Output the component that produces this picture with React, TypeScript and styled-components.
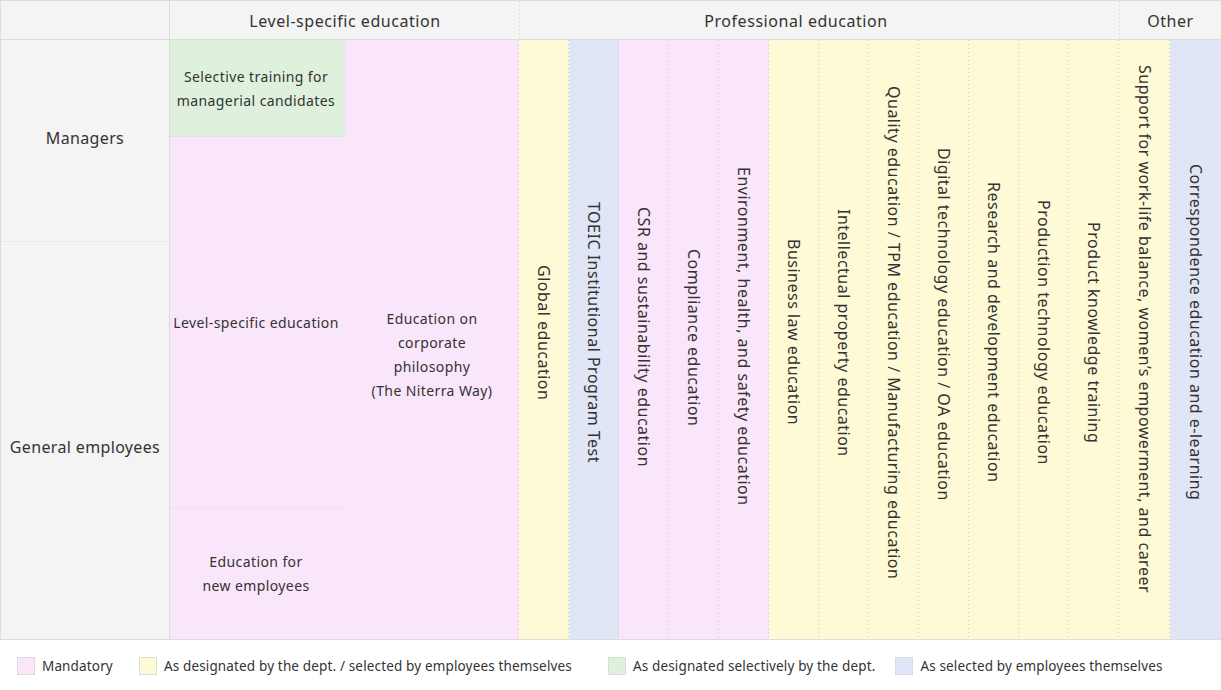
import React from 'react';
import styled, { createGlobalStyle, css } from 'styled-components';

type Tone = 'pink' | 'yellow' | 'green' | 'blue';

const tones: Record<Tone, string> = {
  pink: '#fae6fa',
  yellow: '#fffad6',
  green: '#dff1dc',
  blue: '#e0e6f5',
};

const line = '#dcdcdc';
const dot = '#cfcfcf';

const dottedRight = css`
  background-image: repeating-linear-gradient(to bottom, ${dot} 0 1px, transparent 1px 4px);
  background-size: 1px 100%;
  background-position: right top;
  background-repeat: no-repeat;
`;

const dottedBottom = css`
  background-image: repeating-linear-gradient(to right, ${dot} 0 1px, transparent 1px 4px);
  background-size: 100% 1px;
  background-position: left bottom;
  background-repeat: no-repeat;
`;

const GlobalStyle = createGlobalStyle`
  html, body {
    margin: 0;
    padding: 0;
    background: #fff;
  }
  body {
    font-family: 'Noto Sans', 'Noto Sans CJK JP', sans-serif;
    color: #333;
  }
`;

const Page = styled.div`
  width: 1221px;
  height: 690px;
  overflow: hidden;
`;

const Table = styled.div`
  display: flex;
  flex-direction: column;
  border-top: 1px solid ${line};
  border-bottom: 1px solid ${line};
`;

const HeaderRow = styled.div`
  display: grid;
  grid-template-columns: 170px 350px 600px 101px;
  height: 38px;
  background: #f4f4f4;
  border-bottom: 1px solid ${line};
`;

const Corner = styled.div`
  border-left: 1px solid ${line};
  border-right: 1px solid ${line};
`;

const HeadCell = styled.div<{ $last?: boolean; $shift?: number }>`
  display: flex;
  align-items: center;
  justify-content: center;
  padding-top: 2px;
  padding-right: ${({ $shift = 0 }) => $shift}px;
  font-size: 16px;
  letter-spacing: 0.55px;
  ${({ $last }) => ($last ? '' : dottedRight)}
`;

const Body = styled.div`
  display: flex;
  height: 599px;
`;

const Labels = styled.div`
  width: 170px;
  flex: none;
  display: flex;
  flex-direction: column;
  background: #f4f4f4;
  border-left: 1px solid ${line};
  border-right: 1px solid ${line};
  box-sizing: border-box;
`;

const Label = styled.div<{ $h?: number; $top?: boolean }>`
  display: flex;
  align-items: center;
  justify-content: center;
  font-size: 16px;
  letter-spacing: 0.35px;
  ${({ $h }) => ($h ? `height: ${$h}px; flex: none; padding-bottom: 6px; box-sizing: border-box;` : 'flex: 1; padding-top: 12px;')}
  ${({ $top }) => ($top ? dottedBottom : '')}
`;

const LevelCol = styled.div`
  width: 175px;
  flex: none;
  display: flex;
  flex-direction: column;
  ${dottedRight}
  background-color: ${tones.pink};
`;

const Cell = styled.div<{ $tone: Tone; $h?: number; $divided?: boolean }>`
  display: flex;
  align-items: center;
  justify-content: center;
  padding-right: 3px;
  text-align: center;
  font-size: 14px;
  line-height: 24px;
  letter-spacing: 0.4px;
  ${({ $h }) => ($h ? `height: ${$h}px; flex: none;` : 'flex: 1;')}
  ${({ $divided }) => ($divided ? dottedBottom : '')}
  background-color: ${({ $tone }) => tones[$tone]};
`;

const Philosophy = styled.div`
  width: 174px;
  flex: none;
  display: flex;
  align-items: center;
  justify-content: center;
  padding-top: 30px;
  box-sizing: border-box;
  text-align: center;
  font-size: 14px;
  line-height: 24px;
  letter-spacing: 0.4px;
  ${dottedRight}
  background-color: ${tones.pink};
`;

const VCol = styled.div<{ $tone: Tone; $w?: number; $last?: boolean; $offset?: number }>`
  width: ${({ $w = 50 }) => $w}px;
  flex: none;
  display: flex;
  align-items: center;
  justify-content: center;
  padding-bottom: ${({ $offset = 0 }) => 14 - $offset * 2}px;
  box-sizing: border-box;
  ${({ $last }) => ($last ? '' : dottedRight)}
  background-color: ${({ $tone }) => tones[$tone]};
`;

const VText = styled.span`
  writing-mode: vertical-rl;
  font-size: 16px;
  line-height: 20px;
  letter-spacing: 0.5px;
  white-space: nowrap;
`;

const Legend = styled.div`
  display: flex;
  align-items: center;
  padding: 17px 0 0 17px;
`;

const LegendItem = styled.div<{ $space: number }>`
  display: flex;
  align-items: center;
  gap: 7px;
  margin-right: ${({ $space }) => $space}px;
  font-size: 13.5px;
  letter-spacing: 0.15px;
`;

const Swatch = styled.span<{ $tone: Tone }>`
  width: 16px;
  height: 16px;
  border: 1px solid ${line};
  background: ${({ $tone }) => tones[$tone]};
`;

const courses: { label: string; tone: Tone; offset?: number }[] = [
  { label: 'Global education', tone: 'yellow' },
  { label: 'TOEIC Institutional Program Test', tone: 'blue' },
  { label: 'CSR and sustainability education', tone: 'pink', offset: 5 },
  { label: 'Compliance education', tone: 'pink', offset: 5 },
  { label: 'Environment, health, and safety education', tone: 'pink', offset: 4 },
  { label: 'Business law education', tone: 'yellow' },
  { label: 'Intellectual property education', tone: 'yellow' },
  { label: 'Quality education / TPM education / Manufacturing education', tone: 'yellow' },
  { label: 'Digital technology education / OA education', tone: 'yellow', offset: -8 },
  { label: 'Research and development education', tone: 'yellow' },
  { label: 'Production technology education', tone: 'yellow' },
  { label: 'Product knowledge training', tone: 'yellow' },
];

const legend: { label: string; tone: Tone; space: number }[] = [
  { label: 'Mandatory', tone: 'pink', space: 26 },
  { label: 'As designated by the dept. / selected by employees themselves', tone: 'yellow', space: 36 },
  { label: 'As designated selectively by the dept.', tone: 'green', space: 20 },
  { label: 'As selected by employees themselves', tone: 'blue', space: 0 },
];

export default function App() {
  return (
    <Page>
      <GlobalStyle />
      <Table>
        <HeaderRow>
          <Corner />
          <HeadCell>Level-specific education</HeadCell>
          <HeadCell $shift={48}>Professional education</HeadCell>
          <HeadCell $last>Other</HeadCell>
        </HeaderRow>
        <Body>
          <Labels>
            <Label $h={202} $top>
              Managers
            </Label>
            <Label>General employees</Label>
          </Labels>
          <LevelCol>
            <Cell $tone="green" $h={97} $divided>
              Selective training for
              <br />
              managerial candidates
            </Cell>
            <Cell $tone="pink" $h={372} $divided>
              Level-specific education
            </Cell>
            <Cell $tone="pink">
              Education for
              <br />
              new employees
            </Cell>
          </LevelCol>
          <Philosophy>
            Education on
            <br />
            corporate
            <br />
            philosophy
            <br />
            (The Niterra Way)
          </Philosophy>
          {courses.map((c) => (
            <VCol key={c.label} $tone={c.tone} $offset={c.offset}>
              <VText>{c.label}</VText>
            </VCol>
          ))}
          <VCol $tone="yellow" $w={51} $offset={-3}>
            <VText>Support for work-life balance, women’s empowerment, and career</VText>
          </VCol>
          <VCol $tone="blue" $w={51} $last>
            <VText>Correspondence education and e-learning</VText>
          </VCol>
        </Body>
      </Table>
      <Legend>
        {legend.map((l) => (
          <LegendItem key={l.label} $space={l.space}>
            <Swatch $tone={l.tone} />
            {l.label}
          </LegendItem>
        ))}
      </Legend>
    </Page>
  );
}
